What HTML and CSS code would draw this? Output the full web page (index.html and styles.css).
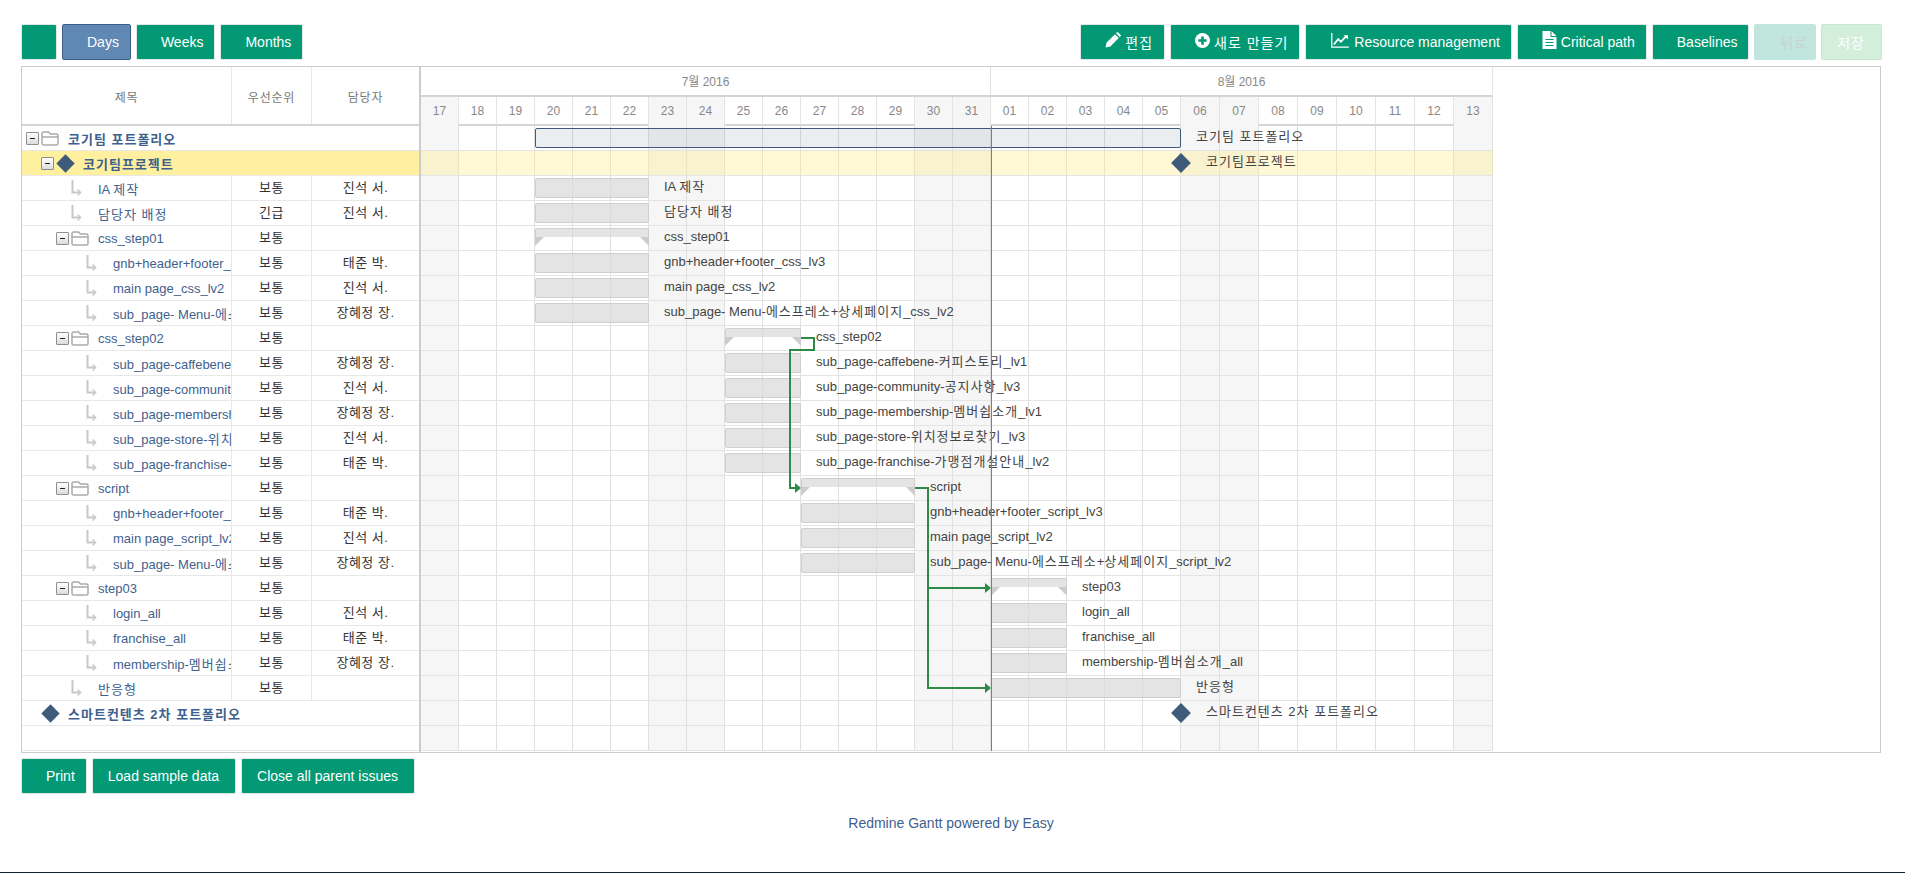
FILE: index.html
```html
<!DOCTYPE html>
<html lang="ko">
<head>
    <meta charset="utf-8">
    <title>Gantt</title>
    <link rel="stylesheet" href="styles.css">
</head>
<body>
    <svg class="defs" width="0" height="0">
        <symbol id="folder" viewBox="0 0 18 15">
            <path d="M1 6V2.6Q1 1 2.6 1H7.5L9.5 3H15.4Q17 3 17 4.6V12.4Q17 14 15.4 14H2.6Q1 14 1 12.4V6H17" fill="none" stroke="#aaa" stroke-width="1.5"/>
        </symbol>
        <symbol id="leaf" viewBox="0 0 11 16">
            <path d="M1.5 0V12.5H9" fill="none" stroke="#c8c8c8" stroke-width="2"/>
            <path d="M6.5 9.5L9.7 12.5L6.5 15.5" fill="none" stroke="#c8c8c8" stroke-width="1.4"/>
        </symbol>
    </svg>

    <div class="page">
        <div class="toolbar">
            <div class="btn-group">
                <a class="btn"></a>
                <a class="btn active">Days</a>
                <a class="btn">Weeks</a>
                <a class="btn">Months</a>
            </div>
            <div class="btn-group">
                <a class="btn ko">
                    <svg class="ico" width="16" height="16" viewBox="0 0 16 16"><path d="M0.5 15.5L1.6 10.6L10 2.2L13.8 6L5.4 14.4ZM11 1.2L12 0.3Q12.6 -0.1 13.2 0.4L15.6 2.8Q16.1 3.4 15.7 4L14.8 5Z" fill="#fff"/></svg>
                    편집
                </a>
                <a class="btn ko">
                    <svg class="ico" width="15" height="15" viewBox="0 0 16 16"><circle cx="8" cy="8" r="8" fill="#fff"/><path d="M8 3.6V12.4M3.6 8H12.4" stroke="#029974" stroke-width="2.8"/></svg>
                    새로 만들기
                </a>
                <a class="btn">
                    <svg class="ico" width="20" height="15" viewBox="0 0 20 17"><path d="M0.7 0V16H20" fill="none" stroke="#fff" stroke-width="1.4"/><path d="M3 13L8 7L11 10L16.5 4" fill="none" stroke="#fff" stroke-width="2"/><path d="M14 2.5H19V7.5Z" fill="#fff"/></svg>
                    Resource management
                </a>
                <a class="btn">
                    <svg class="ico" width="15" height="18" viewBox="0 0 14 18"><path d="M0 0H8V6H14V18H0ZM9 0L14 5H9Z" fill="#fff"/><path d="M3 8.5H11M3 11.5H11M3 14.5H11" stroke="#029974" stroke-width="1.2"/></svg>
                    Critical path
                </a>
                <a class="btn">Baselines</a>
                <a class="btn ko btn-back">뒤로</a>
                <a class="btn ko btn-save">저장</a>
            </div>
        </div>

        <div class="gantt">
            <div class="grid">
                <div class="grid-head">
                    <div class="c-title">제목</div>
                    <div class="c-pri">우선순위</div>
                    <div class="c-who">담당자</div>
                </div>

                <div class="row parent"><div class="c-title full lv0"><span class="toggle"></span><span class="tree-ico"><svg width="18" height="15"><use href="#folder"/></svg></span><span class="name ko">코기팀 포트폴리오</span></div></div>
                <div class="row parent selected"><div class="c-title full lv1"><span class="toggle"></span><span class="tree-ico"><i class="diamond"></i></span><span class="name ko">코기팀프로젝트</span></div></div>
                <div class="row"><div class="c-title lv2"><span class="no-toggle"></span><span class="tree-ico"><svg width="11" height="16"><use href="#leaf"/></svg></span><span class="name">IA <span class="ko">제작</span></span></div><div class="c-pri">보통</div><div class="c-who">진석 서.</div></div>
                <div class="row"><div class="c-title lv2"><span class="no-toggle"></span><span class="tree-ico"><svg width="11" height="16"><use href="#leaf"/></svg></span><span class="name ko">담당자 배정</span></div><div class="c-pri">긴급</div><div class="c-who">진석 서.</div></div>
                <div class="row"><div class="c-title lv2"><span class="toggle"></span><span class="tree-ico"><svg width="18" height="15"><use href="#folder"/></svg></span><span class="name">css_step01</span></div><div class="c-pri">보통</div><div class="c-who"></div></div>
                <div class="row"><div class="c-title lv3"><span class="no-toggle"></span><span class="tree-ico"><svg width="11" height="16"><use href="#leaf"/></svg></span><span class="name">gnb+header+footer_css_lv3</span></div><div class="c-pri">보통</div><div class="c-who">태준 박.</div></div>
                <div class="row"><div class="c-title lv3"><span class="no-toggle"></span><span class="tree-ico"><svg width="11" height="16"><use href="#leaf"/></svg></span><span class="name">main page_css_lv2</span></div><div class="c-pri">보통</div><div class="c-who">진석 서.</div></div>
                <div class="row"><div class="c-title lv3"><span class="no-toggle"></span><span class="tree-ico"><svg width="11" height="16"><use href="#leaf"/></svg></span><span class="name">sub_page- Menu-<span class="ko">에스프레소</span>+<span class="ko">상세페이지</span>_css_lv2</span></div><div class="c-pri">보통</div><div class="c-who">장혜정 장.</div></div>
                <div class="row"><div class="c-title lv2"><span class="toggle"></span><span class="tree-ico"><svg width="18" height="15"><use href="#folder"/></svg></span><span class="name">css_step02</span></div><div class="c-pri">보통</div><div class="c-who"></div></div>
                <div class="row"><div class="c-title lv3"><span class="no-toggle"></span><span class="tree-ico"><svg width="11" height="16"><use href="#leaf"/></svg></span><span class="name">sub_page-caffebene-<span class="ko">커피스토리</span>_lv1</span></div><div class="c-pri">보통</div><div class="c-who">장혜정 장.</div></div>
                <div class="row"><div class="c-title lv3"><span class="no-toggle"></span><span class="tree-ico"><svg width="11" height="16"><use href="#leaf"/></svg></span><span class="name">sub_page-community-<span class="ko">공지사항</span>_lv3</span></div><div class="c-pri">보통</div><div class="c-who">진석 서.</div></div>
                <div class="row"><div class="c-title lv3"><span class="no-toggle"></span><span class="tree-ico"><svg width="11" height="16"><use href="#leaf"/></svg></span><span class="name">sub_page-membership-<span class="ko">멤버쉽소개</span>_lv1</span></div><div class="c-pri">보통</div><div class="c-who">장혜정 장.</div></div>
                <div class="row"><div class="c-title lv3"><span class="no-toggle"></span><span class="tree-ico"><svg width="11" height="16"><use href="#leaf"/></svg></span><span class="name">sub_page-store-<span class="ko">위치정보로찾기</span>_lv3</span></div><div class="c-pri">보통</div><div class="c-who">진석 서.</div></div>
                <div class="row"><div class="c-title lv3"><span class="no-toggle"></span><span class="tree-ico"><svg width="11" height="16"><use href="#leaf"/></svg></span><span class="name">sub_page-franchise-<span class="ko">가맹점개설안내</span>_lv2</span></div><div class="c-pri">보통</div><div class="c-who">태준 박.</div></div>
                <div class="row"><div class="c-title lv2"><span class="toggle"></span><span class="tree-ico"><svg width="18" height="15"><use href="#folder"/></svg></span><span class="name">script</span></div><div class="c-pri">보통</div><div class="c-who"></div></div>
                <div class="row"><div class="c-title lv3"><span class="no-toggle"></span><span class="tree-ico"><svg width="11" height="16"><use href="#leaf"/></svg></span><span class="name">gnb+header+footer_script_lv3</span></div><div class="c-pri">보통</div><div class="c-who">태준 박.</div></div>
                <div class="row"><div class="c-title lv3"><span class="no-toggle"></span><span class="tree-ico"><svg width="11" height="16"><use href="#leaf"/></svg></span><span class="name">main page_script_lv2</span></div><div class="c-pri">보통</div><div class="c-who">진석 서.</div></div>
                <div class="row"><div class="c-title lv3"><span class="no-toggle"></span><span class="tree-ico"><svg width="11" height="16"><use href="#leaf"/></svg></span><span class="name">sub_page- Menu-<span class="ko">에스프레소</span>+<span class="ko">상세페이지</span>_script_lv2</span></div><div class="c-pri">보통</div><div class="c-who">장혜정 장.</div></div>
                <div class="row"><div class="c-title lv2"><span class="toggle"></span><span class="tree-ico"><svg width="18" height="15"><use href="#folder"/></svg></span><span class="name">step03</span></div><div class="c-pri">보통</div><div class="c-who"></div></div>
                <div class="row"><div class="c-title lv3"><span class="no-toggle"></span><span class="tree-ico"><svg width="11" height="16"><use href="#leaf"/></svg></span><span class="name">login_all</span></div><div class="c-pri">보통</div><div class="c-who">진석 서.</div></div>
                <div class="row"><div class="c-title lv3"><span class="no-toggle"></span><span class="tree-ico"><svg width="11" height="16"><use href="#leaf"/></svg></span><span class="name">franchise_all</span></div><div class="c-pri">보통</div><div class="c-who">태준 박.</div></div>
                <div class="row"><div class="c-title lv3"><span class="no-toggle"></span><span class="tree-ico"><svg width="11" height="16"><use href="#leaf"/></svg></span><span class="name">membership-<span class="ko">멤버쉽소개</span>_all</span></div><div class="c-pri">보통</div><div class="c-who">장혜정 장.</div></div>
                <div class="row"><div class="c-title lv2"><span class="no-toggle"></span><span class="tree-ico"><svg width="11" height="16"><use href="#leaf"/></svg></span><span class="name ko">반응형</span></div><div class="c-pri">보통</div><div class="c-who"></div></div>
                <div class="row parent"><div class="c-title full lv0"><span class="no-toggle"></span><span class="tree-ico"><i class="diamond"></i></span><span class="name ko">스마트컨텐츠 2차 포트폴리오</span></div></div>
                <div class="row parent"></div>
            </div>

            <div class="timeline">
                <div class="months">
                    <div class="month month-jul">7월 2016</div>
                    <div class="month month-aug">8월 2016</div>
                </div>
                <div class="days">
                    <div class="day off">17</div><div class="day">18</div><div class="day">19</div><div class="day">20</div><div class="day">21</div><div class="day">22</div><div class="day off">23</div><div class="day off">24</div><div class="day">25</div><div class="day">26</div><div class="day">27</div><div class="day">28</div><div class="day">29</div><div class="day off">30</div><div class="day off">31</div><div class="day">01</div><div class="day">02</div><div class="day">03</div><div class="day">04</div><div class="day">05</div><div class="day off w39">06</div><div class="day off w39">07</div><div class="day w39">08</div><div class="day w39">09</div><div class="day w39">10</div><div class="day w39">11</div><div class="day w39">12</div><div class="day off w39">13</div>
                </div>
                <div class="tl-body">
                    <div class="columns">
                        <div class="col off"></div><div class="col"></div><div class="col"></div><div class="col"></div><div class="col"></div><div class="col"></div><div class="col off"></div><div class="col off"></div><div class="col"></div><div class="col"></div><div class="col"></div><div class="col"></div><div class="col"></div><div class="col off"></div><div class="col off"></div><div class="col"></div><div class="col"></div><div class="col"></div><div class="col"></div><div class="col"></div><div class="col off w39"></div><div class="col off w39"></div><div class="col w39"></div><div class="col w39"></div><div class="col w39"></div><div class="col w39"></div><div class="col w39"></div><div class="col off w39"></div>
                    </div>

                    <div class="tl-row"><div class="bar bar-project" style="left:114px;width:646px"><span class="bar-label ko">코기팀 포트폴리오</span></div></div>
                    <div class="tl-row selected"><div class="mile" style="left:760px"><i class="diamond big"></i><span class="bar-label ko">코기팀프로젝트</span></div></div>
                    <div class="tl-row"><div class="bar" style="left:114px;width:114px"><span class="bar-label">IA <span class="ko">제작</span></span></div></div>
                    <div class="tl-row"><div class="bar" style="left:114px;width:114px"><span class="bar-label ko">담당자 배정</span></div></div>
                    <div class="tl-row"><div class="bar bar-sum" style="left:114px;width:114px"><span class="bar-label">css_step01</span></div></div>
                    <div class="tl-row"><div class="bar" style="left:114px;width:114px"><span class="bar-label">gnb+header+footer_css_lv3</span></div></div>
                    <div class="tl-row"><div class="bar" style="left:114px;width:114px"><span class="bar-label">main page_css_lv2</span></div></div>
                    <div class="tl-row"><div class="bar" style="left:114px;width:114px"><span class="bar-label">sub_page- Menu-<span class="ko">에스프레소</span>+<span class="ko">상세페이지</span>_css_lv2</span></div></div>
                    <div class="tl-row"><div class="bar bar-sum" style="left:304px;width:76px"><span class="bar-label">css_step02</span></div></div>
                    <div class="tl-row"><div class="bar" style="left:304px;width:76px"><span class="bar-label">sub_page-caffebene-<span class="ko">커피스토리</span>_lv1</span></div></div>
                    <div class="tl-row"><div class="bar" style="left:304px;width:76px"><span class="bar-label">sub_page-community-<span class="ko">공지사항</span>_lv3</span></div></div>
                    <div class="tl-row"><div class="bar" style="left:304px;width:76px"><span class="bar-label">sub_page-membership-<span class="ko">멤버쉽소개</span>_lv1</span></div></div>
                    <div class="tl-row"><div class="bar" style="left:304px;width:76px"><span class="bar-label">sub_page-store-<span class="ko">위치정보로찾기</span>_lv3</span></div></div>
                    <div class="tl-row"><div class="bar" style="left:304px;width:76px"><span class="bar-label">sub_page-franchise-<span class="ko">가맹점개설안내</span>_lv2</span></div></div>
                    <div class="tl-row"><div class="bar bar-sum" style="left:380px;width:114px"><span class="bar-label">script</span></div></div>
                    <div class="tl-row"><div class="bar" style="left:380px;width:114px"><span class="bar-label">gnb+header+footer_script_lv3</span></div></div>
                    <div class="tl-row"><div class="bar" style="left:380px;width:114px"><span class="bar-label">main page_script_lv2</span></div></div>
                    <div class="tl-row"><div class="bar" style="left:380px;width:114px"><span class="bar-label">sub_page- Menu-<span class="ko">에스프레소</span>+<span class="ko">상세페이지</span>_script_lv2</span></div></div>
                    <div class="tl-row"><div class="bar bar-sum" style="left:570px;width:76px"><span class="bar-label">step03</span></div></div>
                    <div class="tl-row"><div class="bar" style="left:570px;width:76px"><span class="bar-label">login_all</span></div></div>
                    <div class="tl-row"><div class="bar" style="left:570px;width:76px"><span class="bar-label">franchise_all</span></div></div>
                    <div class="tl-row"><div class="bar" style="left:570px;width:76px"><span class="bar-label">membership-<span class="ko">멤버쉽소개</span>_all</span></div></div>
                    <div class="tl-row"><div class="bar" style="left:570px;width:190px"><span class="bar-label ko">반응형</span></div></div>
                    <div class="tl-row"><div class="mile" style="left:760px"><i class="diamond big"></i><span class="bar-label ko">스마트컨텐츠 2차 포트폴리오</span></div></div>
                    <div class="tl-row"></div>

                    <svg class="links" width="1072" height="625">
                        <path d="M380 212H393V224H369V362H375" fill="none" stroke="#2e8b47" stroke-width="2"/>
                        <path d="M374 357L380 362L374 367Z" fill="#2e8b47"/>
                        <path d="M494 362H507V562H565M507 462H565" fill="none" stroke="#2e8b47" stroke-width="2"/>
                        <path d="M564 457L570 462L564 467ZM564 557L570 562L564 567Z" fill="#2e8b47"/>
                    </svg>
                    <div class="today"></div>
                </div>
            </div>
        </div>

        <div class="bottom-bar">
            <a class="btn">Print</a>
            <a class="btn plain">Load sample data</a>
            <a class="btn plain">Close all parent issues</a>
        </div>

        <div class="powered">Redmine Gantt powered by Easy</div>
    </div>
    <div class="bottom-line"></div>
</body>
</html>
```
FILE: styles.css
```css
* {
    box-sizing: border-box;
}

html, body {
    height: 100%;
}

body {
    margin: 0;
    background-color: #fff;
    font-family: "Liberation Sans", "Noto Sans CJK KR", sans-serif;
    font-size: 13px;
    color: #333;
    overflow: hidden;
    position: relative;
}

.defs {
    position: absolute;
}

.page {
    padding: 24px 24px 0 21px;
}

/* hangul runs a little wider here than the CJK font's own advance */
.ko {
    letter-spacing: 1px;
}

/* buttons */
.toolbar {
    display: flex;
    justify-content: space-between;
    margin-right: -1px;
}

.btn-group {
    display: flex;
    gap: 5px;
}

.btn {
    display: flex;
    align-items: center;
    height: 36px;
    padding: 0 11px 0 24px;
    background-color: #029974;
    border: 1px solid #e2e8e6;
    border-radius: 2px;
    color: #fff;
    font-size: 14px;
    white-space: nowrap;
}

.btn:empty {
    width: 36px;
    padding: 0;
}

.btn.active {
    background-color: #6088b4;
    border-color: #3e5f88;
}

.btn.plain {
    padding: 0 16px 0 15px;
}

.btn-back {
    padding: 0 7px 0 25px;
    background-color: #c0e6dd;
    border-color: #c0e6dd;
    color: #c9d3d1;
}

.btn-save {
    padding: 0 16px 0 15px;
    background-color: #d3efdb;
    border-color: #c8e8d2;
    color: #fff;
}

.ico {
    margin-right: 4px;
    flex: none;
    transform: translateY(-2px);
}

/* gantt frame */
.gantt {
    display: flex;
    margin-top: 6px;
    height: 687px;
    border: 1px solid #ccc;
}

.grid {
    flex: none;
    width: 399px;
    border-right: 2px solid #ccc;
}

.grid-head {
    display: flex;
    height: 59px;
    border-bottom: 2px solid #d4d4d4;
    font-size: 12px;
    letter-spacing: 0.8px;
    color: #777;
    text-align: center;
}

.grid-head > div {
    display: flex;
    align-items: center;
    justify-content: center;
    padding-top: 1px;
}

.row {
    display: flex;
    height: 25px;
    border-bottom: 1px solid #e8e8e8;
}

.row.selected {
    background-color: #fff09f;
}

.c-title {
    width: 210px;
    border-right: 1px solid #e8e8e8;
}

.c-title.full {
    width: 100%;
    border-right: none;
}

.row .c-title {
    display: flex;
    align-items: center;
    overflow: hidden;
    white-space: nowrap;
}

.c-pri {
    width: 80px;
    border-right: 1px solid #e8e8e8;
}

.c-who {
    width: 107px;
}

.row .c-pri, .row .c-who {
    line-height: 24px;
    letter-spacing: 0.5px;
    text-align: center;
}

.lv0 { padding-left: 4px; }
.lv1 { padding-left: 19px; }
.lv2 { padding-left: 34px; }
.lv3 { padding-left: 49px; }

.toggle, .no-toggle {
    flex: none;
    width: 15px;
}

.toggle::before {
    content: "";
    display: block;
    width: 11px;
    height: 11px;
    border: 1px solid #8f8f8f;
    border-radius: 1px;
    background: linear-gradient(#222, #222) center / 5px 1px no-repeat, linear-gradient(#fff, #dcdcdc);
}

.tree-ico {
    flex: none;
    display: flex;
    align-items: center;
    width: 27px;
}

.name {
    color: #3f5f8e;
}

.parent .name {
    font-weight: bold;
}

.diamond {
    display: block;
    width: 13px;
    height: 13px;
    margin-left: 3px;
    background-color: #3e5b7a;
    transform: rotate(45deg);
}

.diamond.big {
    width: 14px;
    height: 14px;
    margin: 0;
}

/* timeline */
.timeline {
    flex: none;
    width: 1072px;
}

.months {
    display: flex;
    height: 30px;
    border-bottom: 2px solid #d4d4d4;
    border-right: 1px solid #e4e4e4;
    font-size: 12px;
    color: #888;
}

.month {
    display: flex;
    align-items: center;
    justify-content: center;
    padding-bottom: 2px;
}

.month-jul {
    width: 570px;
    border-right: 1px solid #e0e0e0;
}

.month-aug {
    flex: 1;
}

.days {
    display: flex;
    height: 29px;
}

.day {
    flex: none;
    width: 38px;
    border-right: 1px solid #e4e4e4;
    border-bottom: 2px solid #d4d4d4;
    font-size: 12px;
    line-height: 28px;
    color: #888;
    text-align: center;
}

.day.off {
    background-color: #f6f6f6;
    border-bottom: none;
}

.w39 {
    width: 39px;
}

.tl-body {
    position: relative;
}

.columns {
    position: absolute;
    top: 0;
    left: 0;
    bottom: 0;
    display: flex;
}

.col {
    flex: none;
    width: 38px;
    border-right: 1px solid #e0e0e0;
}

.col.w39 {
    width: 39px;
}

.col.off {
    background-color: #f6f6f6;
}

.tl-row {
    position: relative;
    height: 25px;
    border-bottom: 1px solid #e4e4e4;
}

.tl-row.selected {
    background-color: rgba(255, 235, 125, 0.33);
}

.bar {
    position: absolute;
    top: 2px;
    height: 20px;
    background-color: rgba(217, 217, 217, 0.7);
    border: 1px solid #cfcfcf;
    border-radius: 2px;
}

.bar-project {
    background-color: rgba(62, 91, 122, 0.1);
    border-color: #3e5b7a;
}

.bar-sum {
    height: 9px;
    border-bottom: none;
    border-radius: 2px 2px 0 0;
}

.bar-sum::before, .bar-sum::after {
    content: "";
    position: absolute;
    top: 100%;
    width: 0;
    height: 0;
    border-top: 9px solid #ccc;
}

.bar-sum::before {
    left: -1px;
    border-right: 9px solid transparent;
}

.bar-sum::after {
    right: -1px;
    border-left: 9px solid transparent;
}

.bar-label {
    position: absolute;
    top: -1px;
    left: 100%;
    margin-left: 16px;
    line-height: 18px;
    color: #444;
    white-space: nowrap;
}

.mile {
    position: absolute;
    top: 5px;
    width: 0;
    height: 14px;
}

.mile .diamond {
    margin-left: -7px;
}

.mile .bar-label {
    top: -3px;
    left: 25px;
    margin-left: 0;
}

.links {
    position: absolute;
    top: 0;
    left: 0;
}

.today {
    position: absolute;
    top: 0;
    bottom: 0;
    left: 570px;
    width: 1px;
    background-color: #5a86b8;
}

/* footer */
.bottom-bar {
    display: flex;
    gap: 5px;
    margin-top: 5px;
}

.powered {
    margin-top: 21px;
    text-align: center;
    font-size: 14px;
    color: #3f5f8e;
}

.bottom-line {
    position: absolute;
    left: 0;
    right: 0;
    bottom: 0;
    height: 1px;
    background-color: #123;
}
```
